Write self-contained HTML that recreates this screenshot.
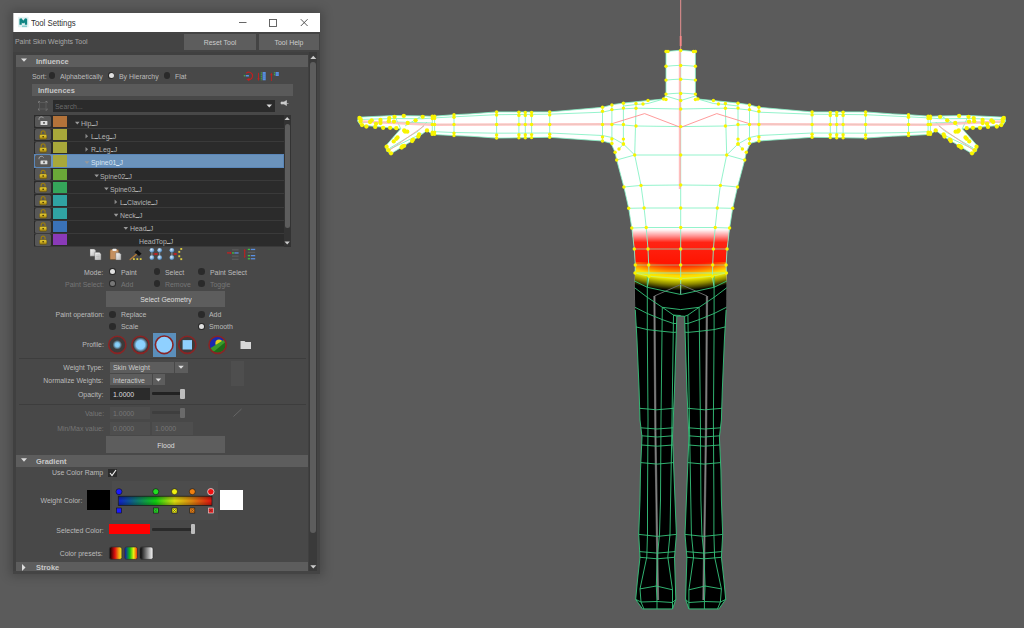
<!DOCTYPE html><html><head><meta charset="utf-8"><style>
html,body{margin:0;padding:0;width:1024px;height:628px;overflow:hidden;background:#5b5b5b;}
.b{position:absolute;box-sizing:border-box;}
.t{position:absolute;height:12px;line-height:12px;white-space:nowrap;font-family:"Liberation Sans",sans-serif;transform:scaleX(0.866);}
svg{position:absolute;left:0;top:0;}
</style></head><body>
<div class="b" style="left:13px;top:13px;width:307px;height:560px;box-shadow:0 0 10px 3px rgba(0,0,0,0.22)"></div>
<div class="b" style="left:13px;top:13px;width:307px;height:19px;background:#ffffff;"></div>
<div class="b" style="left:13px;top:13px;width:1px;height:19px;background:#c4c4c4;"></div>
<div class="b" style="left:13px;top:32px;width:307px;height:541px;background:#444444;"></div>
<svg width="1024" height="628" style="left:0;top:0"><rect x="18.1" y="16.8" width="10.5" height="10.5" fill="#e2f2f2"/><path d="M20.6 24.8 V18.8 L23.3 22.6 L26 18.8 V24.8" stroke="#128684" stroke-width="2.3" fill="none" stroke-linejoin="bevel"/><rect x="22" y="25.5" width="5" height="1.6" fill="#8ad0d0"/><line x1="239" y1="22.5" x2="246.5" y2="22.5" stroke="#555" stroke-width="0.9"/><rect x="269.5" y="19.5" width="7" height="7" stroke="#555" stroke-width="0.9" fill="none"/><path d="M300.8 19.2 L307.6 26 M307.6 19.2 L300.8 26" stroke="#444" stroke-width="0.9"/></svg>
<div class="t" style="left:31px;top:16.5px;font-size:9px;color:#303030;font-weight:400;transform-origin:0 50%;">Tool Settings</div>
<div class="t" style="left:15px;top:35.6px;font-size:8px;color:#a8a8a8;font-weight:400;transform-origin:0 50%;">Paint Skin Weights Tool</div>
<div class="b" style="left:184px;top:34px;width:72px;height:16px;background:#5d5d5d;"></div>
<div class="b" style="left:259px;top:34px;width:60px;height:16px;background:#5d5d5d;"></div>
<div class="t" style="left:120px;width:200px;text-align:center;top:37.0px;font-size:8px;color:#cccccc;font-weight:400;transform-origin:50% 50%;">Reset Tool</div>
<div class="t" style="left:189px;width:200px;text-align:center;top:37.0px;font-size:8px;color:#cccccc;font-weight:400;transform-origin:50% 50%;">Tool Help</div>
<div class="b" style="left:13px;top:52px;width:296px;height:521px;background:#404040;"></div>
<div class="b" style="left:16px;top:55px;width:292px;height:518px;background:#484848;"></div>
<div class="b" style="left:309.3px;top:52px;width:7.899999999999977px;height:521px;background:#3a3a3a;"></div>
<div class="b" style="left:310.2px;top:62px;width:6.199999999999989px;height:471px;background:#5d5d5d;border-radius:3px"></div>
<svg width="1024" height="628"><path d="M310.3 59 L313.3 55.7 L316.3 59 Z" fill="#cccccc"/><path d="M310.3 565.2 L313.3 568.5 L316.3 565.2 Z" fill="#cccccc"/></svg>
<div class="b" style="left:16px;top:55px;width:292px;height:12px;background:#5d5d5d;"></div>
<svg width="1024" height="628"><path d="M21 58.5 L27 58.5 L24 61.8 Z" fill="#dddddd"/></svg>
<div class="t" style="left:35.8px;top:55.6px;font-size:8px;color:#c8c8c8;font-weight:700;transform-origin:0 50%;transform:scaleX(0.93);">Influence</div>
<div class="t" style="left:31.8px;top:70.8px;font-size:8px;color:#bbbbbb;font-weight:400;transform-origin:0 50%;">Sort:</div>
<div class="b" style="left:48.6px;top:72.3px;width:6.6px;height:6.6px;border-radius:50%;background:#2a2a2a"></div>
<div class="t" style="left:60px;top:70.8px;font-size:8px;color:#bbbbbb;font-weight:400;transform-origin:0 50%;">Alphabetically</div>
<div class="b" style="left:107.7px;top:72.3px;width:6.6px;height:6.6px;border-radius:50%;background:#2a2a2a"></div>
<div class="b" style="left:108.5px;top:73.1px;width:5.0px;height:5.0px;border-radius:50%;background:#e0e0e0"></div>
<div class="t" style="left:119px;top:70.8px;font-size:8px;color:#bbbbbb;font-weight:400;transform-origin:0 50%;">By Hierarchy</div>
<div class="b" style="left:163.5px;top:72.3px;width:6.6px;height:6.6px;border-radius:50%;background:#2a2a2a"></div>
<div class="t" style="left:174.8px;top:70.8px;font-size:8px;color:#bbbbbb;font-weight:400;transform-origin:0 50%;">Flat</div>
<div class="b" style="left:32px;top:84px;width:261px;height:12px;background:#5a5a5a;"></div>
<div class="t" style="left:38px;top:85.0px;font-size:8px;color:#c8c8c8;font-weight:700;transform-origin:0 50%;transform:scaleX(0.93);">Influences</div>
<svg width="1024" height="628"><path d="M246.2 73.4 A3.7 3.7 0 1 1 248.6 79.6" stroke="#c02020" stroke-width="1.2" fill="none"/><path d="M249.6 78 L246.3 79.3 L249.2 81.2z" fill="#c02020"/><circle cx="244.4" cy="75.8" r="0.7" fill="#40c040"/><rect x="245.6" y="75.1" width="3.4" height="1.4" rx="0.5" fill="#5a90e0"/><path d="M258.5 72.8 V79" stroke="#c02020" stroke-width="0.9"/><path d="M257.3 78.3 L258.5 81 L259.7 78.3z" fill="#c02020"/><path d="M261.3 72.3 V80.3" stroke="#40c040" stroke-width="0.9" stroke-dasharray="1.2 0.6"/><rect x="262.6" y="72" width="3.1" height="8.3" fill="#5a90e0"/><path d="M262.6 74.2 h3.1 M262.6 76.2 h3.1 M262.6 78.2 h3.1" stroke="#3a6aa8" stroke-width="0.4"/><path d="M271.4 74.5 V81" stroke="#c02020" stroke-width="0.9"/><path d="M270.2 75.3 L271.4 72.4 L272.6 75.3z" fill="#c02020"/><path d="M274.4 72.2 V76" stroke="#40c040" stroke-width="0.9" stroke-dasharray="1.2 0.6"/><rect x="275.6" y="72" width="3.2" height="4" fill="#5a90e0"/><path d="M275.6 74 h3.2" stroke="#3a6aa8" stroke-width="0.4"/></svg>
<svg width="1024" height="628"><path d="M38.5 103 V101.5 H40 M45.5 101.5 H47 V103 M47 108.5 V110 H45.5 M40 110 H38.5 V108.5" stroke="#777" stroke-width="1" fill="none"/><rect x="39.5" y="102.5" width="6.5" height="6.5" stroke="#5a5a5a" stroke-width="1" fill="none"/></svg>
<div class="b" style="left:52.7px;top:99.5px;width:222.3px;height:12.700000000000003px;background:#2b2b2b;"></div>
<div class="t" style="left:54.5px;top:101.0px;font-size:8px;color:#6a6a6a;font-weight:400;transform-origin:0 50%;">Search...</div>
<svg width="1024" height="628"><path d="M266.5 104.5 L272 104.5 L269.25 107.5Z" fill="#dddddd"/><path d="M281 102 h3 l2.5 -1.5 v5 l-2.5 -1.5 h-3z M286.5 103.5 h2" fill="#cccccc" stroke="#cccccc" stroke-width="0.6"/></svg>
<div class="b" style="left:34px;top:115px;width:249.5px;height:132px;background:#2b2b2b;"></div>
<div class="b" style="left:34px;top:127.65px;width:249.5px;height:1.0px;background:#3a3a3a;"></div>
<div class="b" style="left:35.3px;top:115.8px;width:15.700000000000003px;height:11.550000000000011px;background:#575757;border-radius:1.5px"></div>
<div class="b" style="left:52.7px;top:116.0px;width:14.599999999999994px;height:11.150000000000006px;background:#b3733a;"></div>
<div class="t" style="left:81.0px;top:117.9px;font-size:8px;color:#b4b4b4;font-weight:400;transform-origin:0 50%;">Hip<span style="display:inline-block;width:3.6px;height:0;border-bottom:1px solid currentColor;position:relative;top:0.3px"></span>J</div>
<div class="b" style="left:34px;top:140.8px;width:249.5px;height:1.0px;background:#3a3a3a;"></div>
<div class="b" style="left:35.3px;top:128.95000000000002px;width:15.700000000000003px;height:11.549999999999983px;background:#575757;border-radius:1.5px"></div>
<div class="b" style="left:52.7px;top:129.15px;width:14.599999999999994px;height:11.150000000000006px;background:#a8a83a;"></div>
<div class="t" style="left:90.7px;top:131.0px;font-size:8px;color:#b4b4b4;font-weight:400;transform-origin:0 50%;">L<span style="display:inline-block;width:3.6px;height:0;border-bottom:1px solid currentColor;position:relative;top:0.3px"></span>Leg<span style="display:inline-block;width:3.6px;height:0;border-bottom:1px solid currentColor;position:relative;top:0.3px"></span>J</div>
<div class="b" style="left:34px;top:153.95000000000002px;width:249.5px;height:1.0px;background:#3a3a3a;"></div>
<div class="b" style="left:35.3px;top:142.10000000000002px;width:15.700000000000003px;height:11.549999999999983px;background:#575757;border-radius:1.5px"></div>
<div class="b" style="left:52.7px;top:142.3px;width:14.599999999999994px;height:11.150000000000006px;background:#a8a83a;"></div>
<div class="t" style="left:90.7px;top:144.2px;font-size:8px;color:#b4b4b4;font-weight:400;transform-origin:0 50%;">R<span style="display:inline-block;width:3.6px;height:0;border-bottom:1px solid currentColor;position:relative;top:0.3px"></span>Leg<span style="display:inline-block;width:3.6px;height:0;border-bottom:1px solid currentColor;position:relative;top:0.3px"></span>J</div>
<div class="b" style="left:34px;top:154.45px;width:249.5px;height:13.150000000000006px;background:#6b93bc;"></div>
<div class="b" style="left:34px;top:154.45px;width:249.5px;height:13.150000000000006px;background:transparent;border:1px solid #5a86b8"></div>
<div class="b" style="left:35.3px;top:155.25px;width:15.700000000000003px;height:11.549999999999983px;background:#575757;border-radius:1.5px"></div>
<div class="b" style="left:52.7px;top:155.45px;width:14.599999999999994px;height:11.150000000000006px;background:#a8a83a;"></div>
<div class="t" style="left:90.7px;top:157.3px;font-size:8px;color:#d8e6f4;font-weight:400;transform-origin:0 50%;">Spine01<span style="display:inline-block;width:3.6px;height:0;border-bottom:1px solid currentColor;position:relative;top:0.3px"></span>J</div>
<div class="b" style="left:34px;top:180.25px;width:249.5px;height:1.0px;background:#3a3a3a;"></div>
<div class="b" style="left:35.3px;top:168.4px;width:15.700000000000003px;height:11.549999999999983px;background:#575757;border-radius:1.5px"></div>
<div class="b" style="left:52.7px;top:168.6px;width:14.599999999999994px;height:11.150000000000006px;background:#6aa838;"></div>
<div class="t" style="left:100.4px;top:170.5px;font-size:8px;color:#b4b4b4;font-weight:400;transform-origin:0 50%;">Spine02<span style="display:inline-block;width:3.6px;height:0;border-bottom:1px solid currentColor;position:relative;top:0.3px"></span>J</div>
<div class="b" style="left:34px;top:193.4px;width:249.5px;height:1.0px;background:#3a3a3a;"></div>
<div class="b" style="left:35.3px;top:181.55px;width:15.700000000000003px;height:11.549999999999983px;background:#575757;border-radius:1.5px"></div>
<div class="b" style="left:52.7px;top:181.75px;width:14.599999999999994px;height:11.150000000000006px;background:#35a55a;"></div>
<div class="t" style="left:110.1px;top:183.6px;font-size:8px;color:#b4b4b4;font-weight:400;transform-origin:0 50%;">Spine03<span style="display:inline-block;width:3.6px;height:0;border-bottom:1px solid currentColor;position:relative;top:0.3px"></span>J</div>
<div class="b" style="left:34px;top:206.55px;width:249.5px;height:1.0px;background:#3a3a3a;"></div>
<div class="b" style="left:35.3px;top:194.70000000000002px;width:15.700000000000003px;height:11.549999999999983px;background:#575757;border-radius:1.5px"></div>
<div class="b" style="left:52.7px;top:194.9px;width:14.599999999999994px;height:11.150000000000006px;background:#30a3a3;"></div>
<div class="t" style="left:119.8px;top:196.8px;font-size:8px;color:#b4b4b4;font-weight:400;transform-origin:0 50%;">L<span style="display:inline-block;width:3.6px;height:0;border-bottom:1px solid currentColor;position:relative;top:0.3px"></span>Clavicle<span style="display:inline-block;width:3.6px;height:0;border-bottom:1px solid currentColor;position:relative;top:0.3px"></span>J</div>
<div class="b" style="left:34px;top:219.70000000000002px;width:249.5px;height:1.0px;background:#3a3a3a;"></div>
<div class="b" style="left:35.3px;top:207.85000000000002px;width:15.700000000000003px;height:11.549999999999983px;background:#575757;border-radius:1.5px"></div>
<div class="b" style="left:52.7px;top:208.05px;width:14.599999999999994px;height:11.150000000000006px;background:#30a3a3;"></div>
<div class="t" style="left:119.8px;top:209.9px;font-size:8px;color:#b4b4b4;font-weight:400;transform-origin:0 50%;">Neck<span style="display:inline-block;width:3.6px;height:0;border-bottom:1px solid currentColor;position:relative;top:0.3px"></span>J</div>
<div class="b" style="left:34px;top:232.85px;width:249.5px;height:1.0px;background:#3a3a3a;"></div>
<div class="b" style="left:35.3px;top:221.0px;width:15.700000000000003px;height:11.549999999999983px;background:#575757;border-radius:1.5px"></div>
<div class="b" style="left:52.7px;top:221.2px;width:14.599999999999994px;height:11.150000000000006px;background:#3a72b8;"></div>
<div class="t" style="left:129.5px;top:223.1px;font-size:8px;color:#b4b4b4;font-weight:400;transform-origin:0 50%;">Head<span style="display:inline-block;width:3.6px;height:0;border-bottom:1px solid currentColor;position:relative;top:0.3px"></span>J</div>
<div class="b" style="left:34px;top:246.00000000000003px;width:249.5px;height:1.0px;background:#3a3a3a;"></div>
<div class="b" style="left:35.3px;top:234.15000000000003px;width:15.700000000000003px;height:11.549999999999983px;background:#575757;border-radius:1.5px"></div>
<div class="b" style="left:52.7px;top:234.35000000000002px;width:14.599999999999994px;height:11.150000000000006px;background:#8a3ab8;"></div>
<div class="t" style="left:139.2px;top:236.2px;font-size:8px;color:#b4b4b4;font-weight:400;transform-origin:0 50%;">HeadTop<span style="display:inline-block;width:3.6px;height:0;border-bottom:1px solid currentColor;position:relative;top:0.3px"></span>J</div>
<svg width="1024" height="628"><defs><linearGradient id="lockg" x1="0" x2="0" y1="0" y2="1"><stop offset="0" stop-color="#e8d038"/><stop offset="0.5" stop-color="#d0b020"/><stop offset="1" stop-color="#8a7010"/></linearGradient></defs><path d="M39 119.775 v-1 a2.4 2.2 0 0 1 4.6 -0.6" stroke="#aaaaaa" stroke-width="0.9" fill="none"/><rect x="40.5" y="120.97500000000001" width="6.9" height="3.9" rx="0.5" fill="#dddddd"/><rect x="43.4" y="121.97500000000001" width="1.2" height="1.8" fill="#222"/><path d="M75.0 121.775 h4.6 l-2.3 2.8z" fill="#9a9a9a"/><path d="M41.2 134.225 v-1.3 a1.95 2.1 0 0 1 3.9 0 v1.3" stroke="#9a7c10" stroke-width="1.25" fill="none"/><rect x="39.5" y="134.42499999999998" width="7.3" height="4.8" rx="1.3" fill="url(#lockg)" stroke="#5a4800" stroke-width="0.4"/><circle cx="43.15" cy="136.625" r="0.75" fill="#2a2200"/><path d="M85.5 133.725 v4.8 l2.6 -2.4z" fill="#8a8a8a"/><path d="M41.2 147.375 v-1.3 a1.95 2.1 0 0 1 3.9 0 v1.3" stroke="#9a7c10" stroke-width="1.25" fill="none"/><rect x="39.5" y="147.575" width="7.3" height="4.8" rx="1.3" fill="url(#lockg)" stroke="#5a4800" stroke-width="0.4"/><circle cx="43.15" cy="149.775" r="0.75" fill="#2a2200"/><path d="M85.5 146.875 v4.8 l2.6 -2.4z" fill="#8a8a8a"/><path d="M39 159.22499999999997 v-1 a2.4 2.2 0 0 1 4.6 -0.6" stroke="#aaaaaa" stroke-width="0.9" fill="none"/><rect x="40.5" y="160.42499999999998" width="6.9" height="3.9" rx="0.5" fill="#dddddd"/><rect x="43.4" y="161.42499999999998" width="1.2" height="1.8" fill="#222"/><path d="M84.7 161.22499999999997 h4.6 l-2.3 2.8z" fill="#9a9a9a"/><path d="M41.2 173.67499999999998 v-1.3 a1.95 2.1 0 0 1 3.9 0 v1.3" stroke="#9a7c10" stroke-width="1.25" fill="none"/><rect x="39.5" y="173.87499999999997" width="7.3" height="4.8" rx="1.3" fill="url(#lockg)" stroke="#5a4800" stroke-width="0.4"/><circle cx="43.15" cy="176.075" r="0.75" fill="#2a2200"/><path d="M94.4 174.37499999999997 h4.6 l-2.3 2.8z" fill="#9a9a9a"/><path d="M41.2 186.825 v-1.3 a1.95 2.1 0 0 1 3.9 0 v1.3" stroke="#9a7c10" stroke-width="1.25" fill="none"/><rect x="39.5" y="187.02499999999998" width="7.3" height="4.8" rx="1.3" fill="url(#lockg)" stroke="#5a4800" stroke-width="0.4"/><circle cx="43.15" cy="189.225" r="0.75" fill="#2a2200"/><path d="M104.1 187.52499999999998 h4.6 l-2.3 2.8z" fill="#9a9a9a"/><path d="M41.2 199.975 v-1.3 a1.95 2.1 0 0 1 3.9 0 v1.3" stroke="#9a7c10" stroke-width="1.25" fill="none"/><rect x="39.5" y="200.17499999999998" width="7.3" height="4.8" rx="1.3" fill="url(#lockg)" stroke="#5a4800" stroke-width="0.4"/><circle cx="43.15" cy="202.375" r="0.75" fill="#2a2200"/><path d="M114.6 199.475 v4.8 l2.6 -2.4z" fill="#8a8a8a"/><path d="M41.2 213.125 v-1.3 a1.95 2.1 0 0 1 3.9 0 v1.3" stroke="#9a7c10" stroke-width="1.25" fill="none"/><rect x="39.5" y="213.325" width="7.3" height="4.8" rx="1.3" fill="url(#lockg)" stroke="#5a4800" stroke-width="0.4"/><circle cx="43.15" cy="215.525" r="0.75" fill="#2a2200"/><path d="M113.8 213.825 h4.6 l-2.3 2.8z" fill="#9a9a9a"/><path d="M41.2 226.27499999999998 v-1.3 a1.95 2.1 0 0 1 3.9 0 v1.3" stroke="#9a7c10" stroke-width="1.25" fill="none"/><rect x="39.5" y="226.47499999999997" width="7.3" height="4.8" rx="1.3" fill="url(#lockg)" stroke="#5a4800" stroke-width="0.4"/><circle cx="43.15" cy="228.67499999999998" r="0.75" fill="#2a2200"/><path d="M123.5 226.97499999999997 h4.6 l-2.3 2.8z" fill="#9a9a9a"/><path d="M41.2 239.425 v-1.3 a1.95 2.1 0 0 1 3.9 0 v1.3" stroke="#9a7c10" stroke-width="1.25" fill="none"/><rect x="39.5" y="239.625" width="7.3" height="4.8" rx="1.3" fill="url(#lockg)" stroke="#5a4800" stroke-width="0.4"/><circle cx="43.15" cy="241.82500000000002" r="0.75" fill="#2a2200"/></svg>
<div class="b" style="left:283.5px;top:115px;width:7.300000000000011px;height:132px;background:#333333;"></div>
<div class="b" style="left:284.5px;top:123.6px;width:5.5px;height:104.4px;background:#5d5d5d;border-radius:3px"></div>
<svg width="1024" height="628"><path d="M284.5 120 L287.2 117 L289.8 120Z" fill="#cccccc"/><path d="M284.5 241.5 L287.2 244.5 L289.8 241.5Z" fill="#cccccc"/></svg>
<svg width="1024" height="628"><defs><linearGradient id="docg" x1="0" x2="1" y1="0" y2="1"><stop offset="0" stop-color="#f8f8f8"/><stop offset="1" stop-color="#b8b8b8"/></linearGradient><radialGradient id="ballg" cx="0.4" cy="0.35" r="0.7"><stop offset="0" stop-color="#d8ecff"/><stop offset="0.6" stop-color="#7aaad8"/><stop offset="1" stop-color="#3a6a98"/></radialGradient></defs><path d="M90 249 h4.3 l1.5 1.5 v5.7 h-5.8z" fill="url(#docg)" stroke="#555" stroke-width="0.4"/><path d="M94.8 252.3 h4.6 l1.7 1.7 v6.1 h-6.3z" fill="url(#docg)" stroke="#555" stroke-width="0.4"/><path d="M96 255 h3.5 M96 256.5 h3.5 M96 258 h3.5" stroke="#999" stroke-width="0.4"/><rect x="110" y="249.6" width="8.7" height="10" rx="1.2" fill="#c49060" stroke="#6a4a20" stroke-width="0.5"/><rect x="112.3" y="248.8" width="4.4" height="2.2" rx="1" fill="#eeeeee"/><path d="M115.8 252.8 h3.6 l1.7 1.7 v5.6 h-5.3z" fill="url(#docg)" stroke="#555" stroke-width="0.4"/><path d="M130.2 259.5 L137.2 253.6" stroke="#b07838" stroke-width="1.4" stroke-linecap="round"/><path d="M134.5 252.2 L137.3 249.8 L141.6 253.8 L139 256z" fill="#111"/><rect x="133" y="258.2" width="1.8" height="1.8" fill="#d8c840"/><rect x="136.4" y="258.2" width="1.8" height="1.8" fill="#d8c840"/><rect x="139.8" y="258.2" width="1.8" height="1.8" fill="#d8c840"/><path d="M151.9 250.3 V257.7 M159.7 250.3 V257.7" stroke="#aaaaaa" stroke-width="0.8"/><path d="M153.5 254 H158" stroke="#cc2020" stroke-width="1"/><circle cx="155.8" cy="254" r="1.1" fill="#cc2020"/><circle cx="151.9" cy="250.3" r="2.4" fill="url(#ballg)"/><circle cx="151.9" cy="257.7" r="2.4" fill="url(#ballg)"/><circle cx="159.7" cy="250.3" r="2.4" fill="url(#ballg)"/><circle cx="159.7" cy="257.7" r="2.4" fill="url(#ballg)"/><path d="M171.9 250.3 V257.7" stroke="#aaaaaa" stroke-width="0.8"/><path d="M173.5 254 H177" stroke="#cc2020" stroke-width="1"/><circle cx="175.3" cy="254" r="1.1" fill="#cc2020"/><circle cx="171.9" cy="250.3" r="2.4" fill="url(#ballg)"/><circle cx="171.9" cy="257.7" r="2.4" fill="url(#ballg)"/><rect x="180.3" y="248" width="1.9" height="1.9" fill="#d8c840"/><rect x="178.3" y="250.9" width="1.9" height="1.9" fill="#d8c840"/><rect x="178.3" y="255.3" width="1.9" height="1.9" fill="#d8c840"/><rect x="180.3" y="258.2" width="1.9" height="1.9" fill="#d8c840"/><path d="M227 252.9 H231" stroke="#c02020" stroke-width="1.3"/><path d="M230 251.6 L231.8 252.9 L230 254.2z" fill="#c02020"/><rect x="232" y="249.2" width="6.6" height="1.3" fill="#5a5a5a"/><rect x="232" y="252.3" width="2" height="1.3" fill="#40c040"/><rect x="234.4" y="252.3" width="4.2" height="1.3" fill="#5a90e0"/><rect x="232" y="255.5" width="6.6" height="1.3" fill="#5a5a5a"/><rect x="232" y="258.7" width="6.6" height="1.3" fill="#5a5a5a"/><path d="M244.7 249.8 V257.3" stroke="#c02020" stroke-width="1.1"/><path d="M243.6 250.6 L244.7 249 L245.8 250.6z M243.6 256.5 L244.7 258.1 L245.8 256.5z" fill="#c02020"/><rect x="247.8" y="248.8" width="2.2" height="1.3" fill="#40c040"/><rect x="250.8" y="248.8" width="4.4" height="1.3" fill="#5a90e0"/><rect x="247.8" y="251.8" width="7.4" height="1.3" fill="#5a5a5a"/><rect x="247.8" y="255" width="2.2" height="1.3" fill="#40c040"/><rect x="250.8" y="255" width="4.4" height="1.3" fill="#5a90e0"/><rect x="247.8" y="258.1" width="2.2" height="1.3" fill="#40c040"/><rect x="250.8" y="258.1" width="4.4" height="1.3" fill="#5a90e0"/></svg>
<div class="t" style="right:920.3px;top:266.7px;font-size:8px;color:#bbbbbb;font-weight:400;transform-origin:100% 50%;">Mode:</div>
<div class="b" style="left:109.3px;top:268.3px;width:6.6px;height:6.6px;border-radius:50%;background:#2a2a2a"></div>
<div class="b" style="left:110.1px;top:269.1px;width:5.0px;height:5.0px;border-radius:50%;background:#e0e0e0"></div>
<div class="t" style="left:120.9px;top:266.7px;font-size:8px;color:#bbbbbb;font-weight:400;transform-origin:0 50%;">Paint</div>
<div class="b" style="left:153.7px;top:268.2px;width:6.6px;height:6.6px;border-radius:50%;background:#2a2a2a"></div>
<div class="t" style="left:165px;top:266.7px;font-size:8px;color:#bbbbbb;font-weight:400;transform-origin:0 50%;">Select</div>
<div class="b" style="left:198.39999999999998px;top:268.2px;width:6.6px;height:6.6px;border-radius:50%;background:#2a2a2a"></div>
<div class="t" style="left:209.7px;top:266.7px;font-size:8px;color:#bbbbbb;font-weight:400;transform-origin:0 50%;">Paint Select</div>
<div class="t" style="right:920.3px;top:279.3px;font-size:8px;color:#767676;font-weight:400;transform-origin:100% 50%;">Paint Select:</div>
<div class="b" style="left:109.3px;top:280.4px;width:6.6px;height:6.6px;border-radius:50%;background:#2a2a2a"></div>
<div class="b" style="left:110.1px;top:281.2px;width:5.0px;height:5.0px;border-radius:50%;background:#777777"></div>
<div class="t" style="left:120.9px;top:279.3px;font-size:8px;color:#767676;font-weight:400;transform-origin:0 50%;">Add</div>
<div class="b" style="left:153.7px;top:280.4px;width:6.6px;height:6.6px;border-radius:50%;background:#2a2a2a"></div>
<div class="t" style="left:165px;top:279.3px;font-size:8px;color:#767676;font-weight:400;transform-origin:0 50%;">Remove</div>
<div class="b" style="left:198.39999999999998px;top:280.4px;width:6.6px;height:6.6px;border-radius:50%;background:#2a2a2a"></div>
<div class="t" style="left:209.7px;top:279.3px;font-size:8px;color:#767676;font-weight:400;transform-origin:0 50%;">Toggle</div>
<div class="b" style="left:106px;top:291px;width:119px;height:16.30000000000001px;background:#5d5d5d;"></div>
<div class="t" style="left:65.5px;width:200px;text-align:center;top:294.2px;font-size:8px;color:#dddddd;font-weight:400;transform-origin:50% 50%;">Select Geometry</div>
<div class="t" style="right:920.3px;top:308.5px;font-size:8px;color:#bbbbbb;font-weight:400;transform-origin:100% 50%;">Paint operation:</div>
<div class="b" style="left:109.3px;top:311.0px;width:6.6px;height:6.6px;border-radius:50%;background:#2a2a2a"></div>
<div class="t" style="left:120.8px;top:308.5px;font-size:8px;color:#bbbbbb;font-weight:400;transform-origin:0 50%;">Replace</div>
<div class="b" style="left:198.29999999999998px;top:311.0px;width:6.6px;height:6.6px;border-radius:50%;background:#2a2a2a"></div>
<div class="t" style="left:209.4px;top:308.5px;font-size:8px;color:#bbbbbb;font-weight:400;transform-origin:0 50%;">Add</div>
<div class="b" style="left:109.3px;top:323.4px;width:6.6px;height:6.6px;border-radius:50%;background:#2a2a2a"></div>
<div class="t" style="left:120.8px;top:320.9px;font-size:8px;color:#bbbbbb;font-weight:400;transform-origin:0 50%;">Scale</div>
<div class="b" style="left:198.29999999999998px;top:323.4px;width:6.6px;height:6.6px;border-radius:50%;background:#2a2a2a"></div>
<div class="b" style="left:199.1px;top:324.2px;width:5.0px;height:5.0px;border-radius:50%;background:#e0e0e0"></div>
<div class="t" style="left:209.4px;top:320.9px;font-size:8px;color:#bbbbbb;font-weight:400;transform-origin:0 50%;">Smooth</div>
<div class="t" style="right:920.3px;top:339.0px;font-size:8px;color:#bbbbbb;font-weight:400;transform-origin:100% 50%;">Profile:</div>
<div class="b" style="left:152.9px;top:333px;width:22.900000000000006px;height:23.5px;background:#5b8fbb;"></div>
<svg width="1024" height="628"><defs><radialGradient id="pg1"><stop offset="0" stop-color="#90d4ff"/><stop offset="0.25" stop-color="#80c8f0"/><stop offset="0.55" stop-color="#3c3c3c"/><stop offset="1" stop-color="#3a3a3a"/></radialGradient><radialGradient id="pg2"><stop offset="0" stop-color="#90d4ff"/><stop offset="0.5" stop-color="#8ad0ff"/><stop offset="0.85" stop-color="#3c3c3c"/><stop offset="1" stop-color="#3a3a3a"/></radialGradient><clipPath id="globe"><circle cx="217.6" cy="344.8" r="8"/></clipPath></defs><circle cx="117.3" cy="344.8" r="8.6" fill="url(#pg1)" stroke="#8a2424" stroke-width="1.6"/><circle cx="140.5" cy="344.8" r="8.6" fill="url(#pg2)" stroke="#8a2424" stroke-width="1.6"/><circle cx="164.2" cy="344.8" r="8.8" fill="#8fd0ff" stroke="#8a2424" stroke-width="1.6"/><circle cx="187.3" cy="344.8" r="8.6" fill="#3c3c3c" stroke="#8a2424" stroke-width="1.6"/><rect x="182.6" y="340.1" width="9.4" height="9.4" fill="#8fd0ff"/><g clip-path="url(#globe)"><rect x="209" y="336" width="18" height="18" fill="#1a28b0"/><circle cx="219" cy="343.2" r="3.6" fill="#e0d020"/><polygon points="208,349.5 219.5,342.5 227,338 227,354 208,354" fill="#3a9a2a"/><polygon points="211,354 226.5,341 227,354" fill="#1e6a1a"/></g><circle cx="217.6" cy="344.8" r="8.6" fill="none" stroke="#8a2424" stroke-width="1.6"/><path d="M240.5 341 h4 l1 1 h5.5 v7 h-10.5z" fill="#d8d8d8"/></svg>
<div class="b" style="left:19.4px;top:358.3px;width:286.40000000000003px;height:1.0px;background:#3d3d3d;"></div>
<div class="t" style="right:920.3px;top:362.0px;font-size:8px;color:#bbbbbb;font-weight:400;transform-origin:100% 50%;">Weight Type:</div>
<div class="b" style="left:110.2px;top:361.6px;width:77.39999999999999px;height:11.399999999999977px;background:#5d5d5d;"></div>
<div class="b" style="left:174px;top:361.6px;width:1px;height:11.399999999999977px;background:#484848;"></div>
<div class="t" style="left:112.5px;top:362.0px;font-size:8px;color:#cccccc;font-weight:400;transform-origin:0 50%;">Skin Weight</div>
<div class="t" style="right:920.3px;top:375.0px;font-size:8px;color:#bbbbbb;font-weight:400;transform-origin:100% 50%;">Normalize Weights:</div>
<div class="b" style="left:110.2px;top:374.2px;width:54.60000000000001px;height:11.300000000000011px;background:#5d5d5d;"></div>
<div class="b" style="left:151.7px;top:374.2px;width:1.0px;height:11.300000000000011px;background:#484848;"></div>
<div class="t" style="left:112.5px;top:375.0px;font-size:8px;color:#cccccc;font-weight:400;transform-origin:0 50%;">Interactive</div>
<svg width="1024" height="628"><path d="M178.2 365.8 h5.6 l-2.8 3z M155.6 378.5 h5.6 l-2.8 3z" fill="#dddddd"/></svg>
<div class="b" style="left:231.4px;top:361px;width:13.099999999999994px;height:25px;background:#4e4e4e;"></div>
<div class="t" style="right:920.3px;top:389.0px;font-size:8px;color:#bbbbbb;font-weight:400;transform-origin:100% 50%;">Opacity:</div>
<div class="b" style="left:109.8px;top:387.8px;width:39.8px;height:12.199999999999989px;background:#2b2b2b;"></div>
<div class="t" style="left:112.5px;top:389.0px;font-size:8px;color:#dddddd;font-weight:400;transform-origin:0 50%;">1.0000</div>
<div class="b" style="left:152.4px;top:392.2px;width:29.599999999999994px;height:3.1999999999999886px;background:#222222;border-radius:1px"></div>
<div class="b" style="left:180px;top:389px;width:4.699999999999989px;height:9.800000000000011px;background:#bdbdbd;border-radius:1px"></div>
<div class="b" style="left:19.4px;top:404px;width:286.40000000000003px;height:1px;background:#3d3d3d;"></div>
<div class="t" style="right:920.3px;top:407.5px;font-size:8px;color:#767676;font-weight:400;transform-origin:100% 50%;">Value:</div>
<div class="b" style="left:109.8px;top:406.6px;width:39.8px;height:12.099999999999966px;background:#4e4e4e;"></div>
<div class="t" style="left:112.5px;top:407.5px;font-size:8px;color:#767676;font-weight:400;transform-origin:0 50%;">1.0000</div>
<div class="b" style="left:152.4px;top:411px;width:29.599999999999994px;height:3.1999999999999886px;background:#3e3e3e;border-radius:1px"></div>
<div class="b" style="left:180px;top:407.8px;width:4.699999999999989px;height:9.800000000000011px;background:#6a6a6a;border-radius:1px"></div>
<svg width="1024" height="628"><path d="M233.5 416.5 L241.5 409" stroke="#666" stroke-width="1"/></svg>
<div class="t" style="right:920.3px;top:423.3px;font-size:8px;color:#767676;font-weight:400;transform-origin:100% 50%;">Min/Max value:</div>
<div class="b" style="left:109.8px;top:422.3px;width:39.8px;height:12.399999999999977px;background:#4e4e4e;"></div>
<div class="b" style="left:152.4px;top:422.3px;width:40.599999999999994px;height:12.399999999999977px;background:#4e4e4e;"></div>
<div class="t" style="left:112.5px;top:423.3px;font-size:8px;color:#767676;font-weight:400;transform-origin:0 50%;">0.0000</div>
<div class="t" style="left:155px;top:423.3px;font-size:8px;color:#767676;font-weight:400;transform-origin:0 50%;">1.0000</div>
<div class="b" style="left:106px;top:436.3px;width:119px;height:16.69999999999999px;background:#5d5d5d;"></div>
<div class="t" style="left:65.5px;width:200px;text-align:center;top:439.6px;font-size:8px;color:#dddddd;font-weight:400;transform-origin:50% 50%;">Flood</div>
<div class="b" style="left:16px;top:454.7px;width:292px;height:12.300000000000011px;background:#5d5d5d;"></div>
<svg width="1024" height="628"><path d="M21 458.35 L27 458.35 L24 461.65000000000003 Z" fill="#dddddd"/></svg>
<div class="t" style="left:35.8px;top:455.5px;font-size:8px;color:#c8c8c8;font-weight:700;transform-origin:0 50%;transform:scaleX(0.93);">Gradient</div>
<div class="t" style="right:920.7px;top:467.2px;font-size:8px;color:#bbbbbb;font-weight:400;transform-origin:100% 50%;">Use Color Ramp</div>
<div class="b" style="left:108.4px;top:468.7px;width:8.899999999999991px;height:8.300000000000011px;background:#2b2b2b;"></div>
<svg width="1024" height="628"><path d="M110 473 L112 475.5 L116 470" stroke="#eeeeee" stroke-width="1.2" fill="none"/></svg>
<div class="t" style="right:941.8px;top:494.5px;font-size:8px;color:#bbbbbb;font-weight:400;transform-origin:100% 50%;">Weight Color:</div>
<div class="b" style="left:87px;top:490.3px;width:23.299999999999997px;height:19.69999999999999px;background:#000000;"></div>
<div class="b" style="left:112px;top:480.5px;width:106px;height:39.299999999999955px;background:#4c4c4c;"></div>
<svg width="1024" height="628"><defs><linearGradient id="ramp" x1="0" x2="1"><stop offset="0" stop-color="#1020d0"/><stop offset="0.4" stop-color="#10d010"/><stop offset="0.6" stop-color="#e0e010"/><stop offset="0.8" stop-color="#e08010"/><stop offset="1" stop-color="#e01010"/></linearGradient><linearGradient id="rampsh" x1="0" x2="0" y1="0" y2="1"><stop offset="0" stop-color="#000" stop-opacity="0.35"/><stop offset="0.5" stop-color="#000" stop-opacity="0"/><stop offset="1" stop-color="#000" stop-opacity="0.3"/></linearGradient></defs><rect x="118.3" y="496.2" width="93.7" height="9.3" fill="url(#ramp)" stroke="#222" stroke-width="0.8"/><rect x="118.3" y="496.2" width="93.7" height="9.3" fill="url(#rampsh)"/><circle cx="119" cy="491.7" r="3" fill="#1a1aff" stroke="#111" stroke-width="0.6"/><circle cx="155.8" cy="491.7" r="3" fill="#20e020" stroke="#111" stroke-width="0.6"/><circle cx="174.5" cy="491.7" r="3" fill="#f0f010" stroke="#111" stroke-width="0.6"/><circle cx="192.3" cy="491.7" r="3" fill="#f08010" stroke="#111" stroke-width="0.6"/><circle cx="210.8" cy="491.7" r="3.2" fill="#f01010" stroke="#dddddd" stroke-width="0.8"/><rect x="116.5" y="508" width="5" height="5" fill="#1a1aff" stroke="#111" stroke-width="0.6"/><rect x="153.3" y="508" width="5" height="5" fill="#20e020" stroke="#111" stroke-width="0.6"/><rect x="172" y="508" width="5" height="5" fill="#f0f010" stroke="#111" stroke-width="0.6"/><rect x="189.8" y="508" width="5" height="5" fill="#f08010" stroke="#111" stroke-width="0.6"/><rect x="208.3" y="508" width="5" height="5" fill="#f02020" stroke="#dddddd" stroke-width="0.6"/><path d="M154.3 509 l3 3 m0 -3 l-3 3 M173 509 l3 3 m0 -3 l-3 3 M190.8 509 l3 3 m0 -3 l-3 3 M209.3 509 l3 3 m0 -3 l-3 3" stroke="#333" stroke-width="0.5"/></svg>
<div class="b" style="left:219.7px;top:489.8px;width:23.5px;height:20.69999999999999px;background:#ffffff;"></div>
<div class="t" style="right:920.25px;top:524.6px;font-size:8px;color:#bbbbbb;font-weight:400;transform-origin:100% 50%;">Selected Color:</div>
<div class="b" style="left:109px;top:524px;width:40.69999999999999px;height:10px;background:#ff0000;"></div>
<div class="b" style="left:152px;top:527.5px;width:40px;height:3.5px;background:#2a2a2a;border-radius:1px"></div>
<div class="b" style="left:190.6px;top:524px;width:4.400000000000006px;height:10px;background:#bdbdbd;border-radius:1px"></div>
<div class="t" style="right:920.9px;top:548.3px;font-size:8px;color:#bbbbbb;font-weight:400;transform-origin:100% 50%;">Color presets:</div>
<svg width="1024" height="628"><defs><linearGradient id="cp1" x1="0" x2="1"><stop offset="0" stop-color="#000"/><stop offset="0.45" stop-color="#e01010"/><stop offset="0.75" stop-color="#f0a010"/><stop offset="1" stop-color="#f0f020"/></linearGradient><linearGradient id="cp2" x1="0" x2="1"><stop offset="0" stop-color="#1010c0"/><stop offset="0.4" stop-color="#10c010"/><stop offset="0.7" stop-color="#f0f010"/><stop offset="1" stop-color="#f02010"/></linearGradient><linearGradient id="cp3" x1="0" x2="1"><stop offset="0" stop-color="#000"/><stop offset="1" stop-color="#fff"/></linearGradient></defs><rect x="109.4" y="546.9" width="12.5" height="12.5" rx="2" fill="url(#cp1)" stroke="#333" stroke-width="0.8"/><rect x="124.7" y="546.9" width="12.8" height="12.5" rx="2" fill="url(#cp2)" stroke="#333" stroke-width="0.8"/><rect x="140" y="546.9" width="13" height="12.5" rx="2" fill="url(#cp3)" stroke="#333" stroke-width="0.8"/></svg>
<div class="b" style="left:16px;top:561.9px;width:292px;height:11.100000000000023px;background:#5d5d5d;"></div>
<svg width="1024" height="628"><path d="M22 563.95 L25.5 567.45 L22 570.95 Z" fill="#dddddd"/></svg>
<div class="t" style="left:35.8px;top:562.1px;font-size:8px;color:#c8c8c8;font-weight:700;transform-origin:0 50%;transform:scaleX(0.93);">Stroke</div>
<div class="b" style="left:13px;top:571px;width:307px;height:2.5px;background:#444444;"></div>
<svg width="1024" height="628" style="left:0;top:0">
<defs>
<clipPath id="cu"><polygon points="680.7,50.2 666.0,51.5 666.0,95.0 663.5,99.0 648.0,100.5 624.0,103.0 613.4,104.5 602.5,107.3 549.7,111.9 496.6,111.9 470.0,113.9 454.0,114.7 432.3,116.3 421.8,115.9 394.5,115.5 358.5,117.2 357.6,121.0 360.3,125.1 390.0,127.8 400.7,128.7 385.8,145.8 386.5,151.0 391.0,153.7 418.3,137.0 427.0,130.4 432.3,134.4 454.0,135.6 470.0,136.2 496.6,138.1 549.7,137.3 602.5,141.0 611.0,143.3 615.1,152.3 616.7,160.0 623.9,187.0 628.7,208.3 631.8,228.0 634.3,249.0 635.3,265.0 635.0,273.0 634.7,282.0 634.8,300.0 726.6,300.0 726.7,282.0 726.4,273.0 726.1,265.0 727.1,249.0 729.6,228.0 732.7,208.3 737.5,187.0 744.7,160.0 746.3,152.3 750.4,143.3 758.9,141.0 812.1,137.3 865.6,138.1 892.4,136.2 908.5,135.6 930.4,134.4 935.7,130.4 944.5,137.0 972.0,153.7 976.6,151.0 977.3,145.8 962.3,128.7 973.0,127.8 1003.0,125.1 1005.7,121.0 1004.8,117.2 968.5,115.5 941.0,115.9 930.4,116.3 908.5,114.7 892.4,113.9 865.6,111.9 812.1,111.9 758.9,107.3 748.0,104.5 737.4,103.0 713.4,100.5 697.9,99.0 695.4,95.0 695.4,51.5 680.7,50.2"/></clipPath>
<linearGradient id="band1" gradientUnits="userSpaceOnUse" x1="0" y1="228" x2="0" y2="268"><stop offset="0" stop-color="#ffffff"/><stop offset="0.05" stop-color="#fff4f4"/><stop offset="0.2" stop-color="#ff9494"/><stop offset="0.36" stop-color="#ff2414"/><stop offset="0.9" stop-color="#ff1400"/><stop offset="1" stop-color="#ff3000"/></linearGradient>
<radialGradient id="band2" gradientUnits="userSpaceOnUse" cx="680.7" cy="100" r="200" fx="680.7" fy="100"><stop offset="0.818" stop-color="#ff1a00" stop-opacity="0"/><stop offset="0.826" stop-color="#ff2000"/><stop offset="0.85" stop-color="#ff7400"/><stop offset="0.878" stop-color="#ffdc00"/><stop offset="0.893" stop-color="#f4f000"/><stop offset="0.922" stop-color="#8a8600"/><stop offset="0.952" stop-color="#000000"/><stop offset="1" stop-color="#000000"/></radialGradient>
</defs>
<polygon points="634.7,282.0 635.3,310.0 637.0,340.0 639.1,390.0 640.0,420.0 642.0,437.0 640.5,470.0 640.0,500.0 638.7,534.4 640.0,557.3 637.5,580.0 635.7,599.4 642.5,608.9 672.5,608.9 675.8,599.4 674.5,557.3 676.4,534.4 675.0,500.0 672.5,437.0 674.5,390.0 676.8,316.3 680.7,316.0 684.6,316.3 686.9,390.0 688.9,437.0 686.4,500.0 685.0,534.4 686.9,557.3 685.6,599.4 688.9,608.9 718.9,608.9 725.7,599.4 723.9,580.0 721.4,557.3 722.7,534.4 721.4,500.0 720.9,470.0 719.4,437.0 721.4,420.0 722.3,390.0 724.4,340.0 726.1,310.0 726.7,282.0" fill="#000000"/>
<polygon points="680.7,50.2 666.0,51.5 666.0,95.0 663.5,99.0 648.0,100.5 624.0,103.0 613.4,104.5 602.5,107.3 549.7,111.9 496.6,111.9 470.0,113.9 454.0,114.7 432.3,116.3 421.8,115.9 394.5,115.5 358.5,117.2 357.6,121.0 360.3,125.1 390.0,127.8 400.7,128.7 385.8,145.8 386.5,151.0 391.0,153.7 418.3,137.0 427.0,130.4 432.3,134.4 454.0,135.6 470.0,136.2 496.6,138.1 549.7,137.3 602.5,141.0 611.0,143.3 615.1,152.3 616.7,160.0 623.9,187.0 628.7,208.3 631.8,228.0 634.3,249.0 635.3,265.0 635.0,273.0 634.7,282.0 634.8,300.0 726.6,300.0 726.7,282.0 726.4,273.0 726.1,265.0 727.1,249.0 729.6,228.0 732.7,208.3 737.5,187.0 744.7,160.0 746.3,152.3 750.4,143.3 758.9,141.0 812.1,137.3 865.6,138.1 892.4,136.2 908.5,135.6 930.4,134.4 935.7,130.4 944.5,137.0 972.0,153.7 976.6,151.0 977.3,145.8 962.3,128.7 973.0,127.8 1003.0,125.1 1005.7,121.0 1004.8,117.2 968.5,115.5 941.0,115.9 930.4,116.3 908.5,114.7 892.4,113.9 865.6,111.9 812.1,111.9 758.9,107.3 748.0,104.5 737.4,103.0 713.4,100.5 697.9,99.0 695.4,95.0 695.4,51.5 680.7,50.2" fill="#ffffff"/>
<g clip-path="url(#cu)">
<rect x="600" y="228" width="170" height="40" fill="url(#band1)"/>
<rect x="600" y="262" width="170" height="45" fill="url(#band2)"/>
</g>
<polygon points="680.7,50.2 666.0,51.5 666.0,95.0 663.5,99.0 648.0,100.5 624.0,103.0 613.4,104.5 602.5,107.3 549.7,111.9 496.6,111.9 470.0,113.9 454.0,114.7 432.3,116.3 421.8,115.9 394.5,115.5 358.5,117.2 357.6,121.0 360.3,125.1 390.0,127.8 400.7,128.7 385.8,145.8 386.5,151.0 391.0,153.7 418.3,137.0 427.0,130.4 432.3,134.4 454.0,135.6 470.0,136.2 496.6,138.1 549.7,137.3 602.5,141.0 611.0,143.3 615.1,152.3 616.7,160.0 623.9,187.0 628.7,208.3 631.8,228.0 634.3,249.0 635.3,265.0 635.0,273.0 726.4,273.0 726.1,265.0 727.1,249.0 729.6,228.0 732.7,208.3 737.5,187.0 744.7,160.0 746.3,152.3 750.4,143.3 758.9,141.0 812.1,137.3 865.6,138.1 892.4,136.2 908.5,135.6 930.4,134.4 935.7,130.4 944.5,137.0 972.0,153.7 976.6,151.0 977.3,145.8 962.3,128.7 973.0,127.8 1003.0,125.1 1005.7,121.0 1004.8,117.2 968.5,115.5 941.0,115.9 930.4,116.3 908.5,114.7 892.4,113.9 865.6,111.9 812.1,111.9 758.9,107.3 748.0,104.5 737.4,103.0 713.4,100.5 697.9,99.0 695.4,95.0 695.4,51.5 680.7,50.2" fill="none" stroke="#88f2c6" stroke-width="0.8"/>
<polyline points="666.0,66.3 673.0,65.7 680.7,65.3 688.0,65.7 695.5,66.3" fill="none" stroke="#88f2c6" stroke-width="0.9" stroke-opacity="1"/>
<polyline points="666.0,80.1 673.0,79.5 680.7,79.1 688.0,79.5 695.5,80.1" fill="none" stroke="#88f2c6" stroke-width="0.9" stroke-opacity="1"/>
<polyline points="666.0,94.1 673.0,93.5 680.7,93.1 688.0,93.5 695.5,94.1" fill="none" stroke="#88f2c6" stroke-width="0.9" stroke-opacity="1"/>
<polyline points="666.0,96.0 680.7,100.5 695.5,96.0" fill="none" stroke="#88f2c6" stroke-width="0.9" stroke-opacity="1"/>
<polyline points="432.3,116.3 432.3,134.4" fill="none" stroke="#88f2c6" stroke-width="0.9" stroke-opacity="1"/>
<polyline points="930.4,116.3 930.4,134.4" fill="none" stroke="#88f2c6" stroke-width="0.9" stroke-opacity="1"/>
<polyline points="434.6,116.2 434.6,134.3" fill="none" stroke="#88f2c6" stroke-width="0.9" stroke-opacity="1"/>
<polyline points="928.1,116.2 928.1,134.3" fill="none" stroke="#88f2c6" stroke-width="0.9" stroke-opacity="1"/>
<polyline points="454.0,114.7 454.0,135.6" fill="none" stroke="#88f2c6" stroke-width="0.9" stroke-opacity="1"/>
<polyline points="908.5,114.7 908.5,135.6" fill="none" stroke="#88f2c6" stroke-width="0.9" stroke-opacity="1"/>
<polyline points="496.6,111.9 496.6,138.1" fill="none" stroke="#88f2c6" stroke-width="0.9" stroke-opacity="1"/>
<polyline points="865.6,111.9 865.6,138.1" fill="none" stroke="#88f2c6" stroke-width="0.9" stroke-opacity="1"/>
<polyline points="518.9,112.3 518.9,137.8" fill="none" stroke="#88f2c6" stroke-width="0.9" stroke-opacity="1"/>
<polyline points="843.1,112.3 843.1,137.8" fill="none" stroke="#88f2c6" stroke-width="0.9" stroke-opacity="1"/>
<polyline points="525.3,112.4 525.3,137.7" fill="none" stroke="#88f2c6" stroke-width="0.9" stroke-opacity="1"/>
<polyline points="836.7,112.4 836.7,137.7" fill="none" stroke="#88f2c6" stroke-width="0.9" stroke-opacity="1"/>
<polyline points="531.6,112.5 531.6,137.6" fill="none" stroke="#88f2c6" stroke-width="0.9" stroke-opacity="1"/>
<polyline points="830.3,112.5 830.3,137.6" fill="none" stroke="#88f2c6" stroke-width="0.9" stroke-opacity="1"/>
<polyline points="549.7,111.9 549.7,137.3" fill="none" stroke="#88f2c6" stroke-width="0.9" stroke-opacity="1"/>
<polyline points="812.1,111.9 812.1,137.3" fill="none" stroke="#88f2c6" stroke-width="0.9" stroke-opacity="1"/>
<polyline points="602.5,107.3 602.5,141.0" fill="none" stroke="#88f2c6" stroke-width="0.9" stroke-opacity="1"/>
<polyline points="758.9,107.3 758.9,141.0" fill="none" stroke="#88f2c6" stroke-width="0.9" stroke-opacity="1"/>
<polyline points="611.9,105.0 611.9,143.5" fill="none" stroke="#88f2c6" stroke-width="0.9" stroke-opacity="1"/>
<polyline points="749.5,105.0 749.5,143.5" fill="none" stroke="#88f2c6" stroke-width="0.9" stroke-opacity="1"/>
<polyline points="623.4,103.2 623.4,144.0" fill="none" stroke="#88f2c6" stroke-width="0.9" stroke-opacity="1"/>
<polyline points="738.0,103.2 738.0,144.0" fill="none" stroke="#88f2c6" stroke-width="0.9" stroke-opacity="1"/>
<polyline points="432.3,118.0 454.0,116.8 496.6,114.7 549.7,114.2 602.5,112.2 611.9,110.0 623.4,108.8 636.0,108.2 680.7,109.0" fill="none" stroke="#88f2c6" stroke-width="0.9" stroke-opacity="1"/>
<polyline points="930.4,118.0 908.5,116.8 865.6,114.7 812.1,114.2 758.9,112.2 749.5,110.0 738.0,108.8 725.4,108.2 680.7,109.0" fill="none" stroke="#88f2c6" stroke-width="0.9" stroke-opacity="1"/>
<polyline points="432.3,124.5 454.0,124.5 549.7,124.4 602.5,124.2 623.4,125.0 636.0,126.0 680.7,126.6" fill="none" stroke="#88f2c6" stroke-width="0.9" stroke-opacity="1"/>
<polyline points="930.4,124.5 908.5,124.5 812.1,124.4 758.9,124.2 738.0,125.0 725.4,126.0 680.7,126.6" fill="none" stroke="#88f2c6" stroke-width="0.9" stroke-opacity="1"/>
<polyline points="432.3,131.6 454.0,132.5 496.6,133.2 549.7,133.0 602.5,135.5 611.9,137.5" fill="none" stroke="#88f2c6" stroke-width="0.9" stroke-opacity="1"/>
<polyline points="930.4,131.6 908.5,132.5 865.6,133.2 812.1,133.0 758.9,135.5 749.5,137.5" fill="none" stroke="#88f2c6" stroke-width="0.9" stroke-opacity="1"/>
<polyline points="663.5,99.0 648.0,103.5 636.0,104.5 623.4,106.0" fill="none" stroke="#88f2c6" stroke-width="0.9" stroke-opacity="1"/>
<polyline points="697.9,99.0 713.4,103.5 725.4,104.5 738.0,106.0" fill="none" stroke="#88f2c6" stroke-width="0.9" stroke-opacity="1"/>
<polyline points="680.7,155.0 634.7,155.0 616.7,160.0" fill="none" stroke="#88f2c6" stroke-width="0.9" stroke-opacity="1"/>
<polyline points="680.7,155.0 726.7,155.0 744.7,160.0" fill="none" stroke="#88f2c6" stroke-width="0.9" stroke-opacity="1"/>
<polyline points="634.7,155.0 623.4,144.0 611.9,137.5" fill="none" stroke="#88f2c6" stroke-width="0.9" stroke-opacity="1"/>
<polyline points="726.7,155.0 738.0,144.0 749.5,137.5" fill="none" stroke="#88f2c6" stroke-width="0.9" stroke-opacity="1"/>
<polyline points="619.0,149.0 623.4,144.0" fill="none" stroke="#88f2c6" stroke-width="0.9" stroke-opacity="1"/>
<polyline points="742.4,149.0 738.0,144.0" fill="none" stroke="#88f2c6" stroke-width="0.9" stroke-opacity="1"/>
<polyline points="680.7,185.0 641.0,185.4 623.9,187.0" fill="none" stroke="#88f2c6" stroke-width="0.9" stroke-opacity="1"/>
<polyline points="680.7,185.0 720.4,185.4 737.5,187.0" fill="none" stroke="#88f2c6" stroke-width="0.9" stroke-opacity="1"/>
<polyline points="680.7,208.0 644.1,208.0 628.7,208.3" fill="none" stroke="#88f2c6" stroke-width="0.9" stroke-opacity="1"/>
<polyline points="680.7,208.0 717.3,208.0 732.7,208.3" fill="none" stroke="#88f2c6" stroke-width="0.9" stroke-opacity="1"/>
<polyline points="680.7,227.5 646.2,227.5 631.8,228.0" fill="none" stroke="#88f2c6" stroke-width="0.9" stroke-opacity="1"/>
<polyline points="680.7,227.5 715.2,227.5 729.6,228.0" fill="none" stroke="#88f2c6" stroke-width="0.9" stroke-opacity="1"/>
<polyline points="680.7,249.0 648.0,249.0 634.3,249.0" fill="none" stroke="#88f2c6" stroke-width="0.9" stroke-opacity="0.75"/>
<polyline points="680.7,249.0 713.4,249.0 727.1,249.0" fill="none" stroke="#88f2c6" stroke-width="0.9" stroke-opacity="0.75"/>
<polyline points="680.7,265.0 648.7,265.0 635.3,265.0" fill="none" stroke="#88f2c6" stroke-width="0.9" stroke-opacity="0.6"/>
<polyline points="680.7,265.0 712.7,265.0 726.1,265.0" fill="none" stroke="#88f2c6" stroke-width="0.9" stroke-opacity="0.6"/>
<polyline points="680.7,278.6 649.0,276.3 635.0,273.0" fill="none" stroke="#c8f080" stroke-width="0.9" stroke-opacity="0.8"/>
<polyline points="680.7,278.6 712.4,276.3 726.4,273.0" fill="none" stroke="#c8f080" stroke-width="0.9" stroke-opacity="0.8"/>
<polyline points="636.0,104.5 636.0,108.2 634.7,155.0 641.0,185.4 644.1,208.0 646.2,227.5 648.0,249.0 648.7,265.0 649.0,276.3 647.3,287.3" fill="none" stroke="#88f2c6" stroke-width="0.9" stroke-opacity="1"/>
<polyline points="725.4,104.5 725.4,108.2 726.7,155.0 720.4,185.4 717.3,208.0 715.2,227.5 713.4,249.0 712.7,265.0 712.4,276.3 714.1,287.3" fill="none" stroke="#88f2c6" stroke-width="0.9" stroke-opacity="1"/>
<polyline points="680.7,50.2 680.7,294.5" fill="none" stroke="#88f2c6" stroke-width="0.9" stroke-opacity="1"/>
<polyline points="358.5,119.5 394.5,118.5 421.8,118.8 432.3,118.0" fill="none" stroke="#88f2c6" stroke-width="0.9" stroke-opacity="1"/>
<polyline points="1004.8,119.5 968.5,118.5 941.0,118.8 930.4,118.0" fill="none" stroke="#88f2c6" stroke-width="0.9" stroke-opacity="1"/>
<polyline points="360.0,122.5 394.5,122.0 432.3,123.0" fill="none" stroke="#88f2c6" stroke-width="0.9" stroke-opacity="1"/>
<polyline points="1003.3,122.5 968.5,122.0 930.4,123.0" fill="none" stroke="#88f2c6" stroke-width="0.9" stroke-opacity="1"/>
<polyline points="394.5,115.5 400.7,128.7" fill="none" stroke="#88f2c6" stroke-width="0.9" stroke-opacity="1"/>
<polyline points="968.5,115.5 962.3,128.7" fill="none" stroke="#88f2c6" stroke-width="0.9" stroke-opacity="1"/>
<polyline points="390.0,148.0 418.3,131.0 427.0,122.0" fill="none" stroke="#88f2c6" stroke-width="0.9" stroke-opacity="1"/>
<polyline points="973.0,148.0 944.5,131.0 935.7,122.0" fill="none" stroke="#88f2c6" stroke-width="0.9" stroke-opacity="1"/>
<polyline points="388.0,150.0 422.0,133.5" fill="none" stroke="#88f2c6" stroke-width="0.9" stroke-opacity="1"/>
<polyline points="975.1,150.0 940.8,133.5" fill="none" stroke="#88f2c6" stroke-width="0.9" stroke-opacity="1"/>
<polyline points="405.0,126.0 421.8,115.9" fill="none" stroke="#88f2c6" stroke-width="0.9" stroke-opacity="1"/>
<polyline points="957.9,126.0 941.0,115.9" fill="none" stroke="#88f2c6" stroke-width="0.9" stroke-opacity="1"/>
<line x1="680.7" y1="0" x2="680.7" y2="50" stroke="#ff9a9a" stroke-width="1" stroke-opacity="0.85"/>
<line x1="679.9000000000001" y1="50" x2="679.9000000000001" y2="189" stroke="#ffa8a8" stroke-width="2.2" stroke-opacity="0.75"/>
<line x1="680.7" y1="36" x2="680.7" y2="46" stroke="#ff8a8a" stroke-width="2" stroke-opacity="0.8"/>
<polyline points="680.7,127.4 644.6,113.6 611.0,124.0" fill="none" stroke="#ff8a8a" stroke-width="1.0" stroke-opacity="0.85"/>
<polyline points="680.7,127.4 716.8,113.6 750.4,124.0" fill="none" stroke="#ff8a8a" stroke-width="1.0" stroke-opacity="0.85"/>
<polyline points="611.0,124.2 432.0,124.8 362.0,121.5" fill="none" stroke="#ffbcbc" stroke-width="2.6" stroke-opacity="0.85"/>
<polyline points="750.4,124.2 930.7,124.8 1001.3,121.5" fill="none" stroke="#ffbcbc" stroke-width="2.6" stroke-opacity="0.85"/>
<polyline points="424.0,126.0 389.0,150.5" fill="none" stroke="#ff9a9a" stroke-width="1.0" stroke-opacity="0.8"/>
<polyline points="938.8,126.0 974.0,150.5" fill="none" stroke="#ff9a9a" stroke-width="1.0" stroke-opacity="0.8"/>
<polyline points="680.7,284.5 654.4,296.0" fill="none" stroke="#6a6a6a" stroke-width="1.0" stroke-opacity="1"/>
<polyline points="680.7,284.5 707.0,296.0" fill="none" stroke="#6a6a6a" stroke-width="1.0" stroke-opacity="1"/>
<polyline points="654.4,296.0 655.4,431.6 657.3,557.0 658.0,600.0" fill="none" stroke="#5a5a5a" stroke-width="2.3" stroke-opacity="1"/>
<polyline points="707.0,296.0 706.0,431.6 704.1,557.0 703.4,600.0" fill="none" stroke="#5a5a5a" stroke-width="2.3" stroke-opacity="1"/>
<polyline points="654.4,296.0 655.4,431.6 657.3,557.0 658.0,600.0" fill="none" stroke="#8c8c8c" stroke-width="0.9" stroke-opacity="1"/>
<polyline points="707.0,296.0 706.0,431.6 704.1,557.0 703.4,600.0" fill="none" stroke="#8c8c8c" stroke-width="0.9" stroke-opacity="1"/>
<polyline points="635.3,310.0 637.0,340.0 639.1,390.0 640.0,420.0 642.0,437.0 640.5,470.0 640.0,500.0 638.7,534.4 640.0,557.3 637.5,580.0 635.7,599.4 642.5,608.9 672.5,608.9 675.8,599.4 674.5,557.3 676.4,534.4 675.0,500.0 672.5,437.0 674.5,390.0 676.8,316.3 680.7,316.0 684.6,316.3 686.9,390.0 688.9,437.0 686.4,500.0 685.0,534.4 686.9,557.3 685.6,599.4 688.9,608.9 718.9,608.9 725.7,599.4 723.9,580.0 721.4,557.3 722.7,534.4 721.4,500.0 720.9,470.0 719.4,437.0 721.4,420.0 722.3,390.0 724.4,340.0 726.1,310.0" fill="none" stroke="#36c47c" stroke-width="0.9" stroke-opacity="1"/>
<polyline points="634.7,281.1 647.3,287.3 680.7,294.5" fill="none" stroke="#36c47c" stroke-width="0.9" stroke-opacity="1"/>
<polyline points="726.7,281.1 714.1,287.3 680.7,294.5" fill="none" stroke="#36c47c" stroke-width="0.9" stroke-opacity="1"/>
<polyline points="634.7,287.8 647.3,297.3 662.3,307.3 673.5,315.1 676.8,316.3" fill="none" stroke="#36c47c" stroke-width="0.9" stroke-opacity="1"/>
<polyline points="726.7,287.8 714.1,297.3 699.1,307.3 687.9,315.1 684.6,316.3" fill="none" stroke="#36c47c" stroke-width="0.9" stroke-opacity="1"/>
<polyline points="662.3,307.3 680.7,309.6" fill="none" stroke="#36c47c" stroke-width="0.9" stroke-opacity="1"/>
<polyline points="699.1,307.3 680.7,309.6" fill="none" stroke="#36c47c" stroke-width="0.9" stroke-opacity="1"/>
<polyline points="635.0,307.3 647.3,313.5 662.3,319.6 673.5,323.5 676.5,323.5" fill="none" stroke="#36c47c" stroke-width="0.9" stroke-opacity="1"/>
<polyline points="726.4,307.3 714.1,313.5 699.1,319.6 687.9,323.5 684.9,323.5" fill="none" stroke="#36c47c" stroke-width="0.9" stroke-opacity="1"/>
<polyline points="636.0,326.9 647.3,329.6 662.3,331.3 673.5,332.4 676.3,332.2" fill="none" stroke="#36c47c" stroke-width="0.9" stroke-opacity="1"/>
<polyline points="725.4,326.9 714.1,329.6 699.1,331.3 687.9,332.4 685.1,332.2" fill="none" stroke="#36c47c" stroke-width="0.9" stroke-opacity="1"/>
<polyline points="673.5,315.1 680.7,315.5" fill="none" stroke="#36c47c" stroke-width="0.9" stroke-opacity="1"/>
<polyline points="647.3,276.0 647.3,330.0 648.0,420.0 647.5,500.0 647.5,534.0 646.8,557.0" fill="none" stroke="#36c47c" stroke-width="0.9" stroke-opacity="1"/>
<polyline points="714.1,276.0 714.1,330.0 713.4,420.0 713.9,500.0 713.9,534.0 714.6,557.0" fill="none" stroke="#36c47c" stroke-width="0.9" stroke-opacity="1"/>
<polyline points="662.3,307.3 661.0,420.0 660.5,500.0 659.5,534.0 657.3,557.0" fill="none" stroke="#36c47c" stroke-width="0.9" stroke-opacity="1"/>
<polyline points="699.1,307.3 700.4,420.0 700.9,500.0 701.9,534.0 704.1,557.0" fill="none" stroke="#36c47c" stroke-width="0.9" stroke-opacity="1"/>
<polyline points="673.5,315.1 672.0,420.0 670.6,500.0 670.0,534.0 667.8,557.0" fill="none" stroke="#36c47c" stroke-width="0.9" stroke-opacity="1"/>
<polyline points="687.9,315.1 689.4,420.0 690.8,500.0 691.4,534.0 693.6,557.0" fill="none" stroke="#36c47c" stroke-width="0.9" stroke-opacity="1"/>
<polyline points="639.6,408.3 656.7,409.8 673.7,408.3" fill="none" stroke="#36c47c" stroke-width="0.9" stroke-opacity="1"/>
<polyline points="721.8,408.3 704.7,409.8 687.7,408.3" fill="none" stroke="#36c47c" stroke-width="0.9" stroke-opacity="1"/>
<polyline points="640.9,427.8 656.9,429.0 672.9,427.8" fill="none" stroke="#36c47c" stroke-width="0.9" stroke-opacity="1"/>
<polyline points="720.5,427.8 704.5,429.0 688.5,427.8" fill="none" stroke="#36c47c" stroke-width="0.9" stroke-opacity="1"/>
<polyline points="641.9,435.8 657.2,437.0 672.6,435.8" fill="none" stroke="#36c47c" stroke-width="0.9" stroke-opacity="1"/>
<polyline points="719.5,435.8 704.2,437.0 688.8,435.8" fill="none" stroke="#36c47c" stroke-width="0.9" stroke-opacity="1"/>
<polyline points="641.6,445.0 657.2,446.2 672.8,445.0" fill="none" stroke="#36c47c" stroke-width="0.9" stroke-opacity="1"/>
<polyline points="719.8,445.0 704.2,446.2 688.6,445.0" fill="none" stroke="#36c47c" stroke-width="0.9" stroke-opacity="1"/>
<polyline points="640.8,462.6 657.2,464.1 673.5,462.6" fill="none" stroke="#36c47c" stroke-width="0.9" stroke-opacity="1"/>
<polyline points="720.6,462.6 704.2,464.1 687.9,462.6" fill="none" stroke="#36c47c" stroke-width="0.9" stroke-opacity="1"/>
<polyline points="638.7,534.4 657.5,536.4 676.4,534.4" fill="none" stroke="#36c47c" stroke-width="0.9" stroke-opacity="1"/>
<polyline points="722.7,534.4 703.9,536.4 685.0,534.4" fill="none" stroke="#36c47c" stroke-width="0.9" stroke-opacity="1"/>
<polyline points="639.7,551.6 657.3,553.1 675.0,551.6" fill="none" stroke="#36c47c" stroke-width="0.9" stroke-opacity="1"/>
<polyline points="721.7,551.6 704.1,553.1 686.4,551.6" fill="none" stroke="#36c47c" stroke-width="0.9" stroke-opacity="1"/>
<polyline points="640.0,557.3 657.2,558.8 674.5,557.3" fill="none" stroke="#36c47c" stroke-width="0.9" stroke-opacity="1"/>
<polyline points="721.4,557.3 704.2,558.8 686.9,557.3" fill="none" stroke="#36c47c" stroke-width="0.9" stroke-opacity="1"/>
<polyline points="640.0,588.9 656.3,586.0 672.5,589.8" fill="none" stroke="#36c47c" stroke-width="0.9" stroke-opacity="1"/>
<polyline points="721.4,588.9 705.1,586.0 688.9,589.8" fill="none" stroke="#36c47c" stroke-width="0.9" stroke-opacity="1"/>
<polyline points="635.7,599.4 641.0,602.0 657.0,601.5 672.5,602.5 675.8,599.4" fill="none" stroke="#36c47c" stroke-width="0.9" stroke-opacity="1"/>
<polyline points="725.7,599.4 720.4,602.0 704.4,601.5 688.9,602.5 685.6,599.4" fill="none" stroke="#36c47c" stroke-width="0.9" stroke-opacity="1"/>
<polyline points="646.8,557.0 640.0,588.9 641.0,602.0 643.9,608.9" fill="none" stroke="#36c47c" stroke-width="0.9" stroke-opacity="1"/>
<polyline points="714.6,557.0 721.4,588.9 720.4,602.0 717.5,608.9" fill="none" stroke="#36c47c" stroke-width="0.9" stroke-opacity="1"/>
<polyline points="667.8,557.0 672.5,589.8 672.5,602.5 672.5,608.9" fill="none" stroke="#36c47c" stroke-width="0.9" stroke-opacity="1"/>
<polyline points="693.6,557.0 688.9,589.8 688.9,602.5 688.9,608.9" fill="none" stroke="#36c47c" stroke-width="0.9" stroke-opacity="1"/>
<polyline points="657.3,557.0 656.3,586.0 657.0,601.5 657.0,608.9" fill="none" stroke="#36c47c" stroke-width="0.9" stroke-opacity="1"/>
<polyline points="704.1,557.0 705.1,586.0 704.4,601.5 704.4,608.9" fill="none" stroke="#36c47c" stroke-width="0.9" stroke-opacity="1"/>
<g fill="#f8f400"><circle cx="432.3" cy="116.3" r="1.7"/><circle cx="930.4" cy="116.3" r="1.7"/><circle cx="432.3" cy="118.5" r="1.7"/><circle cx="930.4" cy="118.5" r="1.7"/><circle cx="432.3" cy="124.5" r="1.7"/><circle cx="930.4" cy="124.5" r="1.7"/><circle cx="432.3" cy="132.2" r="1.7"/><circle cx="930.4" cy="132.2" r="1.7"/><circle cx="432.3" cy="134.4" r="1.7"/><circle cx="930.4" cy="134.4" r="1.7"/><circle cx="434.6" cy="116.2" r="1.7"/><circle cx="928.1" cy="116.2" r="1.7"/><circle cx="434.6" cy="118.4" r="1.7"/><circle cx="928.1" cy="118.4" r="1.7"/><circle cx="434.6" cy="124.5" r="1.7"/><circle cx="928.1" cy="124.5" r="1.7"/><circle cx="434.6" cy="132.1" r="1.7"/><circle cx="928.1" cy="132.1" r="1.7"/><circle cx="434.6" cy="134.3" r="1.7"/><circle cx="928.1" cy="134.3" r="1.7"/><circle cx="454.0" cy="114.7" r="1.7"/><circle cx="908.5" cy="114.7" r="1.7"/><circle cx="454.0" cy="117.2" r="1.7"/><circle cx="908.5" cy="117.2" r="1.7"/><circle cx="454.0" cy="124.5" r="1.7"/><circle cx="908.5" cy="124.5" r="1.7"/><circle cx="454.0" cy="133.1" r="1.7"/><circle cx="908.5" cy="133.1" r="1.7"/><circle cx="454.0" cy="135.6" r="1.7"/><circle cx="908.5" cy="135.6" r="1.7"/><circle cx="496.6" cy="111.9" r="1.7"/><circle cx="865.6" cy="111.9" r="1.7"/><circle cx="496.6" cy="115.0" r="1.7"/><circle cx="865.6" cy="115.0" r="1.7"/><circle cx="496.6" cy="124.5" r="1.7"/><circle cx="865.6" cy="124.5" r="1.7"/><circle cx="496.6" cy="135.0" r="1.7"/><circle cx="865.6" cy="135.0" r="1.7"/><circle cx="496.6" cy="138.1" r="1.7"/><circle cx="865.6" cy="138.1" r="1.7"/><circle cx="518.9" cy="112.3" r="1.7"/><circle cx="843.1" cy="112.3" r="1.7"/><circle cx="518.9" cy="115.4" r="1.7"/><circle cx="843.1" cy="115.4" r="1.7"/><circle cx="518.9" cy="124.5" r="1.7"/><circle cx="843.1" cy="124.5" r="1.7"/><circle cx="518.9" cy="134.7" r="1.7"/><circle cx="843.1" cy="134.7" r="1.7"/><circle cx="518.9" cy="137.8" r="1.7"/><circle cx="843.1" cy="137.8" r="1.7"/><circle cx="525.3" cy="112.4" r="1.7"/><circle cx="836.7" cy="112.4" r="1.7"/><circle cx="525.3" cy="115.4" r="1.7"/><circle cx="836.7" cy="115.4" r="1.7"/><circle cx="525.3" cy="124.5" r="1.7"/><circle cx="836.7" cy="124.5" r="1.7"/><circle cx="525.3" cy="134.7" r="1.7"/><circle cx="836.7" cy="134.7" r="1.7"/><circle cx="525.3" cy="137.7" r="1.7"/><circle cx="836.7" cy="137.7" r="1.7"/><circle cx="531.6" cy="112.5" r="1.7"/><circle cx="830.3" cy="112.5" r="1.7"/><circle cx="531.6" cy="115.5" r="1.7"/><circle cx="830.3" cy="115.5" r="1.7"/><circle cx="531.6" cy="124.5" r="1.7"/><circle cx="830.3" cy="124.5" r="1.7"/><circle cx="531.6" cy="134.6" r="1.7"/><circle cx="830.3" cy="134.6" r="1.7"/><circle cx="531.6" cy="137.6" r="1.7"/><circle cx="830.3" cy="137.6" r="1.7"/><circle cx="549.7" cy="111.9" r="1.7"/><circle cx="812.1" cy="111.9" r="1.7"/><circle cx="549.7" cy="114.9" r="1.7"/><circle cx="812.1" cy="114.9" r="1.7"/><circle cx="549.7" cy="124.5" r="1.7"/><circle cx="812.1" cy="124.5" r="1.7"/><circle cx="549.7" cy="134.3" r="1.7"/><circle cx="812.1" cy="134.3" r="1.7"/><circle cx="549.7" cy="137.3" r="1.7"/><circle cx="812.1" cy="137.3" r="1.7"/><circle cx="602.5" cy="107.3" r="1.7"/><circle cx="758.9" cy="107.3" r="1.7"/><circle cx="602.5" cy="111.3" r="1.7"/><circle cx="758.9" cy="111.3" r="1.7"/><circle cx="602.5" cy="124.5" r="1.7"/><circle cx="758.9" cy="124.5" r="1.7"/><circle cx="602.5" cy="137.0" r="1.7"/><circle cx="758.9" cy="137.0" r="1.7"/><circle cx="602.5" cy="141.0" r="1.7"/><circle cx="758.9" cy="141.0" r="1.7"/><circle cx="611.9" cy="105.0" r="1.7"/><circle cx="749.5" cy="105.0" r="1.7"/><circle cx="611.9" cy="109.6" r="1.7"/><circle cx="749.5" cy="109.6" r="1.7"/><circle cx="611.9" cy="124.5" r="1.7"/><circle cx="749.5" cy="124.5" r="1.7"/><circle cx="611.9" cy="138.9" r="1.7"/><circle cx="749.5" cy="138.9" r="1.7"/><circle cx="611.9" cy="143.5" r="1.7"/><circle cx="749.5" cy="143.5" r="1.7"/><circle cx="623.4" cy="103.2" r="1.7"/><circle cx="738.0" cy="103.2" r="1.7"/><circle cx="623.4" cy="108.1" r="1.7"/><circle cx="738.0" cy="108.1" r="1.7"/><circle cx="623.4" cy="124.5" r="1.7"/><circle cx="738.0" cy="124.5" r="1.7"/><circle cx="623.4" cy="139.1" r="1.7"/><circle cx="738.0" cy="139.1" r="1.7"/><circle cx="623.4" cy="144.0" r="1.7"/><circle cx="738.0" cy="144.0" r="1.7"/><circle cx="666.0" cy="51.5" r="1.7"/><circle cx="695.4" cy="51.5" r="1.7"/><circle cx="668.0" cy="51.5" r="1.7"/><circle cx="693.4" cy="51.5" r="1.7"/><circle cx="680.7" cy="50.5" r="1.7"/><circle cx="666.0" cy="66.3" r="1.7"/><circle cx="695.4" cy="66.3" r="1.7"/><circle cx="680.7" cy="65.5" r="1.7"/><circle cx="666.0" cy="80.1" r="1.7"/><circle cx="695.4" cy="80.1" r="1.7"/><circle cx="680.7" cy="79.3" r="1.7"/><circle cx="666.0" cy="94.1" r="1.7"/><circle cx="695.4" cy="94.1" r="1.7"/><circle cx="680.7" cy="93.5" r="1.7"/><circle cx="663.5" cy="99.0" r="1.7"/><circle cx="697.9" cy="99.0" r="1.7"/><circle cx="666.0" cy="99.5" r="1.7"/><circle cx="695.4" cy="99.5" r="1.7"/><circle cx="680.7" cy="100.5" r="1.7"/><circle cx="680.7" cy="109.0" r="1.7"/><circle cx="680.7" cy="126.6" r="1.7"/><circle cx="648.0" cy="100.5" r="1.7"/><circle cx="713.4" cy="100.5" r="1.7"/><circle cx="636.0" cy="103.5" r="1.7"/><circle cx="725.4" cy="103.5" r="1.7"/><circle cx="643.0" cy="104.0" r="1.7"/><circle cx="718.4" cy="104.0" r="1.7"/><circle cx="636.0" cy="108.2" r="1.7"/><circle cx="725.4" cy="108.2" r="1.7"/><circle cx="636.0" cy="126.0" r="1.7"/><circle cx="725.4" cy="126.0" r="1.7"/><circle cx="634.7" cy="155.0" r="1.7"/><circle cx="726.7" cy="155.0" r="1.7"/><circle cx="680.7" cy="155.0" r="1.7"/><circle cx="616.7" cy="160.0" r="1.7"/><circle cx="744.7" cy="160.0" r="1.7"/><circle cx="615.1" cy="152.3" r="1.7"/><circle cx="746.3" cy="152.3" r="1.7"/><circle cx="619.0" cy="149.0" r="1.7"/><circle cx="742.4" cy="149.0" r="1.7"/><circle cx="623.4" cy="144.0" r="1.7"/><circle cx="738.0" cy="144.0" r="1.7"/><circle cx="641.0" cy="185.4" r="1.7"/><circle cx="720.4" cy="185.4" r="1.7"/><circle cx="680.7" cy="185.0" r="1.7"/><circle cx="623.9" cy="187.0" r="1.7"/><circle cx="737.5" cy="187.0" r="1.7"/><circle cx="644.1" cy="208.0" r="1.7"/><circle cx="717.3" cy="208.0" r="1.7"/><circle cx="680.7" cy="208.0" r="1.7"/><circle cx="628.7" cy="208.3" r="1.7"/><circle cx="732.7" cy="208.3" r="1.7"/><circle cx="646.2" cy="227.5" r="1.7"/><circle cx="715.2" cy="227.5" r="1.7"/><circle cx="680.7" cy="227.5" r="1.7"/><circle cx="631.8" cy="228.0" r="1.7"/><circle cx="729.6" cy="228.0" r="1.7"/><circle cx="648.0" cy="249.0" r="1.7"/><circle cx="713.4" cy="249.0" r="1.7"/><circle cx="680.7" cy="249.0" r="1.7"/><circle cx="634.3" cy="249.0" r="1.7"/><circle cx="727.1" cy="249.0" r="1.7"/><circle cx="648.7" cy="265.0" r="1.7"/><circle cx="712.7" cy="265.0" r="1.7"/><circle cx="680.7" cy="265.0" r="1.7"/><circle cx="635.3" cy="265.0" r="1.7"/><circle cx="726.1" cy="265.0" r="1.7"/><circle cx="649.0" cy="276.3" r="1.7"/><circle cx="712.4" cy="276.3" r="1.7"/><circle cx="680.7" cy="278.6" r="1.7"/><circle cx="635.0" cy="273.0" r="1.7"/><circle cx="726.4" cy="273.0" r="1.7"/><circle cx="360.7" cy="119.4" r="2.15"/><circle cx="1002.6" cy="119.4" r="2.15"/><circle cx="359.5" cy="118.0" r="2.15"/><circle cx="1003.8" cy="118.0" r="2.15"/><circle cx="360.5" cy="121.5" r="2.15"/><circle cx="1002.8" cy="121.5" r="2.15"/><circle cx="371.7" cy="120.3" r="2.15"/><circle cx="991.5" cy="120.3" r="2.15"/><circle cx="380.5" cy="119.9" r="2.15"/><circle cx="982.6" cy="119.9" r="2.15"/><circle cx="389.3" cy="118.1" r="2.15"/><circle cx="973.7" cy="118.1" r="2.15"/><circle cx="394.5" cy="116.8" r="2.15"/><circle cx="968.5" cy="116.8" r="2.15"/><circle cx="403.8" cy="115.9" r="2.15"/><circle cx="959.1" cy="115.9" r="2.15"/><circle cx="422.7" cy="116.8" r="2.15"/><circle cx="940.1" cy="116.8" r="2.15"/><circle cx="362.0" cy="125.1" r="2.15"/><circle cx="1001.3" cy="125.1" r="2.15"/><circle cx="366.4" cy="126.5" r="2.15"/><circle cx="996.8" cy="126.5" r="2.15"/><circle cx="375.2" cy="126.9" r="2.15"/><circle cx="988.0" cy="126.9" r="2.15"/><circle cx="383.1" cy="127.8" r="2.15"/><circle cx="980.0" cy="127.8" r="2.15"/><circle cx="390.1" cy="127.8" r="2.15"/><circle cx="972.9" cy="127.8" r="2.15"/><circle cx="396.3" cy="128.2" r="2.15"/><circle cx="966.7" cy="128.2" r="2.15"/><circle cx="370.0" cy="122.0" r="2.15"/><circle cx="993.2" cy="122.0" r="2.15"/><circle cx="376.0" cy="123.8" r="2.15"/><circle cx="987.1" cy="123.8" r="2.15"/><circle cx="380.5" cy="123.0" r="2.15"/><circle cx="982.6" cy="123.0" r="2.15"/><circle cx="388.8" cy="121.2" r="2.15"/><circle cx="974.2" cy="121.2" r="2.15"/><circle cx="394.0" cy="121.6" r="2.15"/><circle cx="969.0" cy="121.6" r="2.15"/><circle cx="404.2" cy="130.4" r="2.15"/><circle cx="958.7" cy="130.4" r="2.15"/><circle cx="405.0" cy="131.5" r="2.15"/><circle cx="957.9" cy="131.5" r="2.15"/><circle cx="407.3" cy="131.7" r="2.15"/><circle cx="955.6" cy="131.7" r="2.15"/><circle cx="396.3" cy="138.8" r="2.15"/><circle cx="966.7" cy="138.8" r="2.15"/><circle cx="397.5" cy="137.5" r="2.15"/><circle cx="965.5" cy="137.5" r="2.15"/><circle cx="393.7" cy="141.4" r="2.15"/><circle cx="969.3" cy="141.4" r="2.15"/><circle cx="386.6" cy="146.7" r="2.15"/><circle cx="976.5" cy="146.7" r="2.15"/><circle cx="388.4" cy="150.2" r="2.15"/><circle cx="974.7" cy="150.2" r="2.15"/><circle cx="391.0" cy="153.3" r="2.15"/><circle cx="972.0" cy="153.3" r="2.15"/><circle cx="401.6" cy="147.5" r="2.15"/><circle cx="961.3" cy="147.5" r="2.15"/><circle cx="402.5" cy="146.5" r="2.15"/><circle cx="960.4" cy="146.5" r="2.15"/><circle cx="404.2" cy="145.8" r="2.15"/><circle cx="958.7" cy="145.8" r="2.15"/><circle cx="412.1" cy="141.0" r="2.15"/><circle cx="950.8" cy="141.0" r="2.15"/><circle cx="413.0" cy="139.6" r="2.15"/><circle cx="949.9" cy="139.6" r="2.15"/><circle cx="418.3" cy="136.6" r="2.15"/><circle cx="944.5" cy="136.6" r="2.15"/><circle cx="419.1" cy="134.4" r="2.15"/><circle cx="943.7" cy="134.4" r="2.15"/><circle cx="415.6" cy="120.3" r="2.15"/><circle cx="947.2" cy="120.3" r="2.15"/><circle cx="407.7" cy="123.0" r="2.15"/><circle cx="955.2" cy="123.0" r="2.15"/><circle cx="427.0" cy="130.4" r="2.15"/><circle cx="935.7" cy="130.4" r="2.15"/></g>
</svg>
</body></html>
